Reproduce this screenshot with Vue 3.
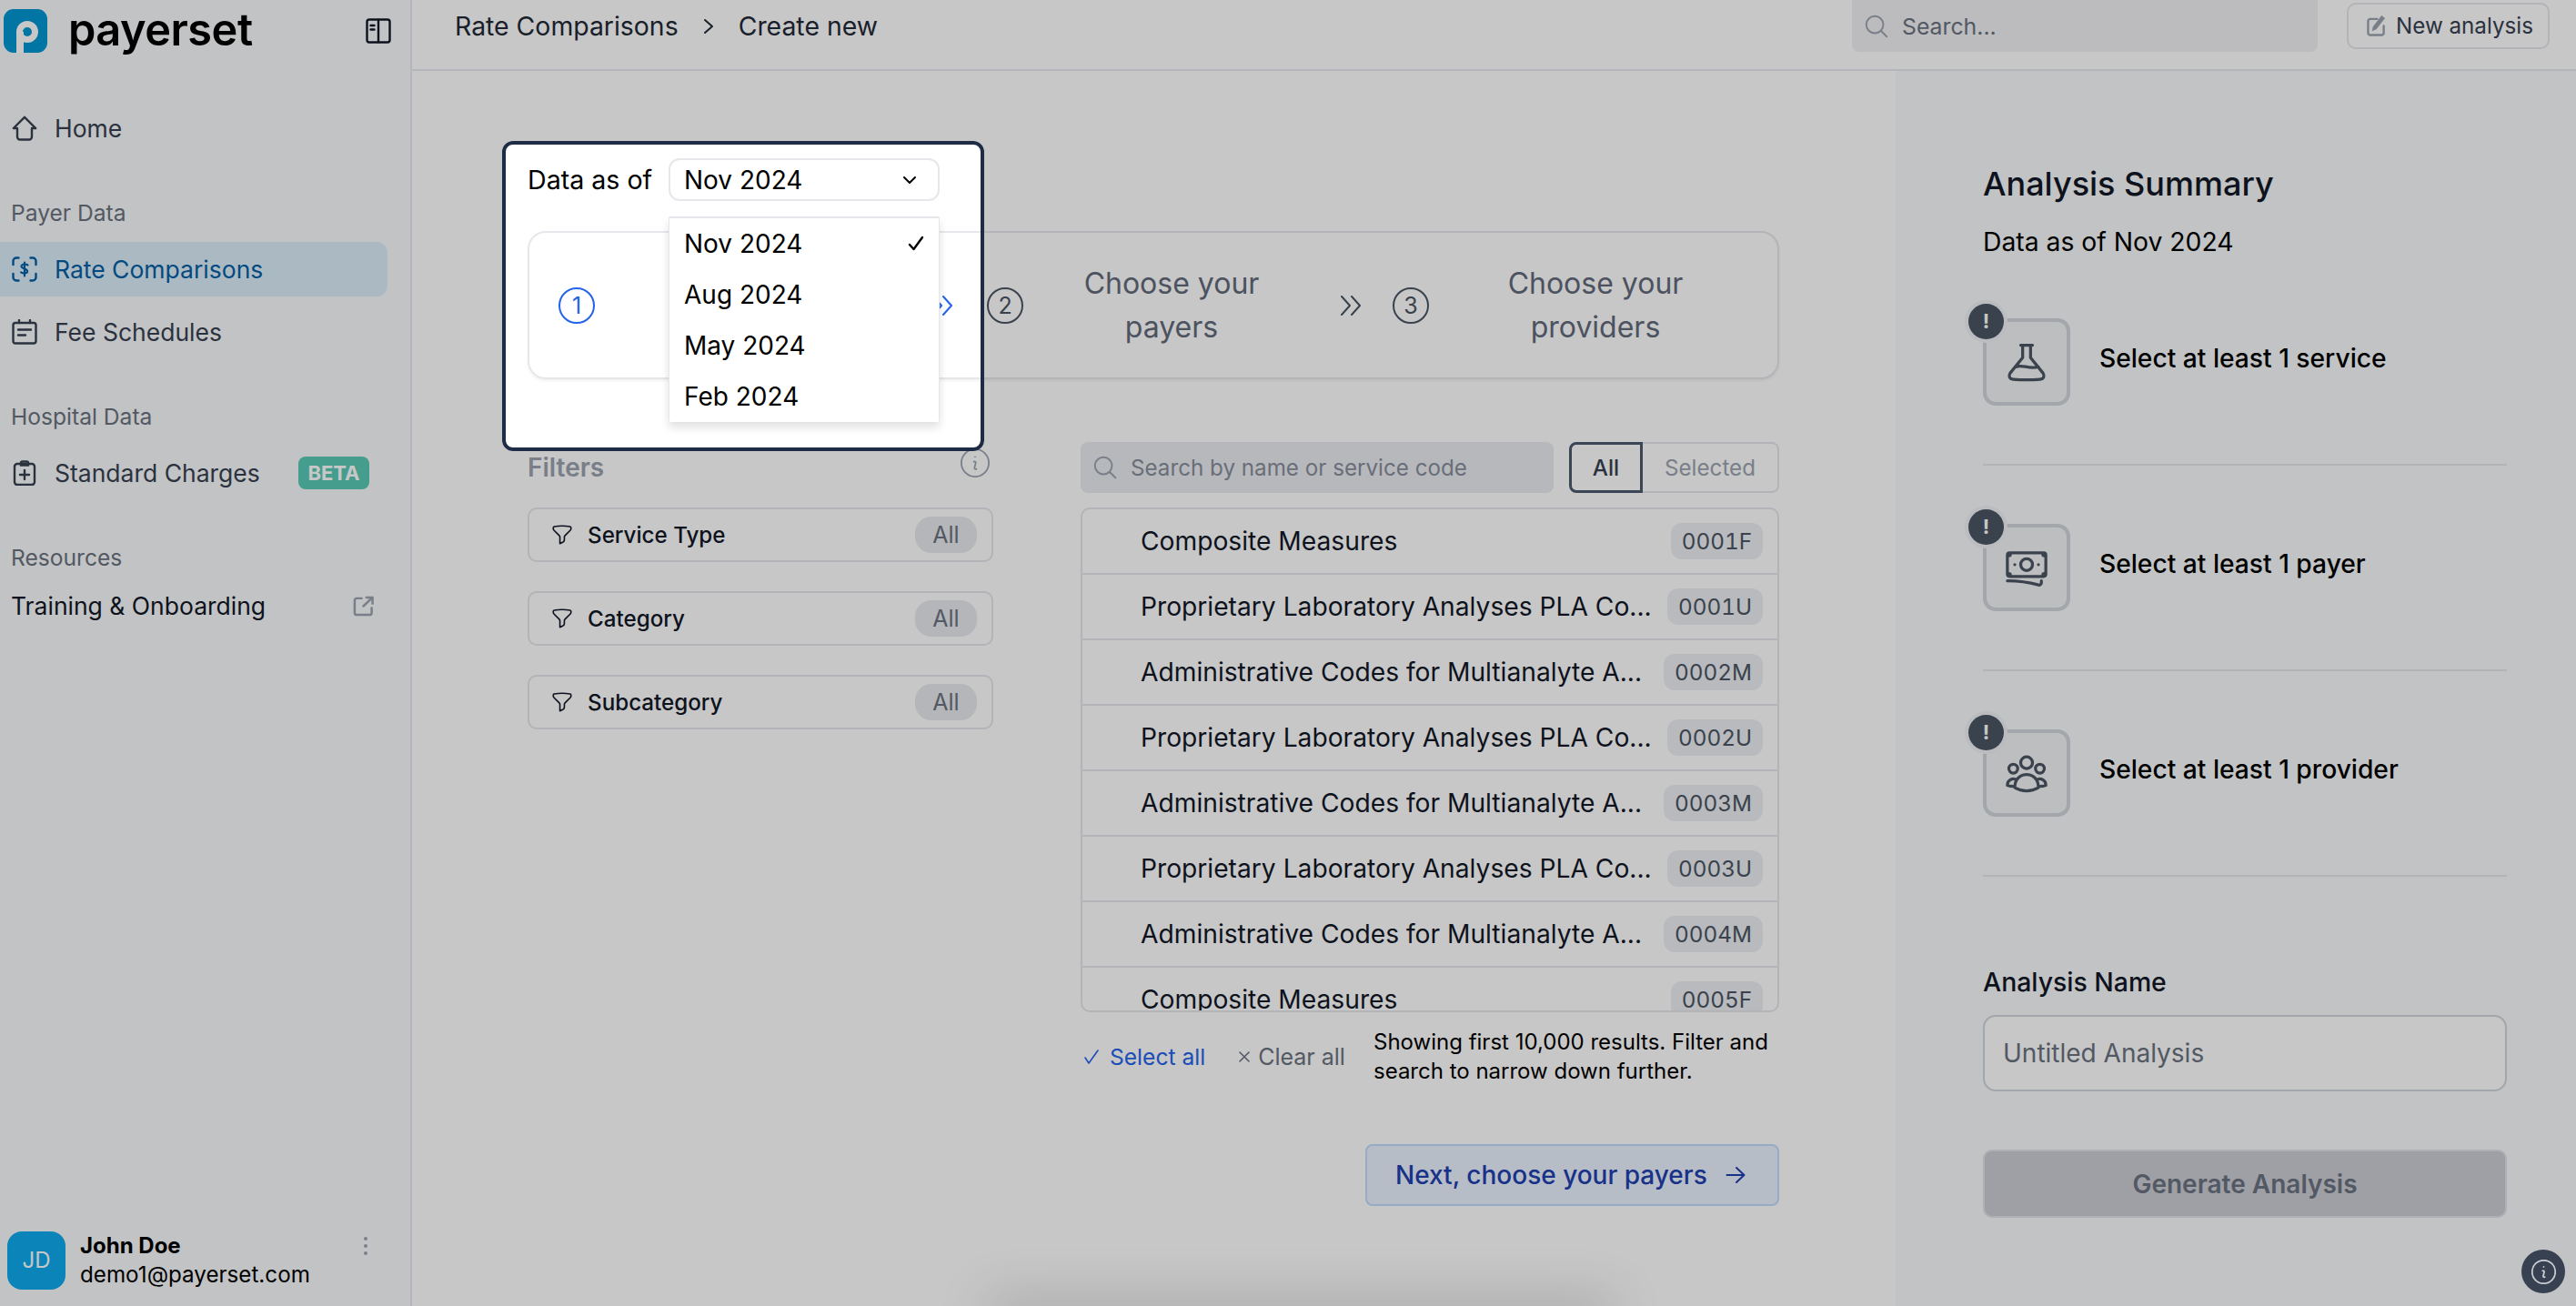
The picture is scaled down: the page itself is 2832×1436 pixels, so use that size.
<template>
  <div class="shell">
    <aside class="sidebar">
      <div class="brand">
        <svg class="logo" viewBox="0 0 48 48">
          <rect width="48" height="48" rx="11" fill="#0296d1" />
          <path d="M14 25h8v23h-8Z" fill="#fff" />
          <circle cx="26" cy="25" r="8.500" fill="none" stroke="#fff" stroke-width="7" />
        </svg>
        <span class="wordmark">payerset</span>
        <svg class="panel-toggle" viewBox="0 0 28 28" fill="none" stroke="#111827" stroke-width="2.400" stroke-linecap="round">
          <rect x="1.500" y="1.500" width="25" height="25" rx="2.500" />
          <path d="M14 2v24M5.500 8h4M5.500 12.500h4" />
        </svg>
      </div>

      <a class="nav-row nav-home">
        <svg class="nav-icon" viewBox="0 0 28 28" fill="none" stroke="currentColor" stroke-width="2.400" stroke-linejoin="round" stroke-linecap="round">
          <path d="M14 1.800 1.800 14h4.200v9.500A3 3 0 0 0 9 26.500h10a3 3 0 0 0 3-3V14h4.200Z" />
        </svg>
        Home
      </a>

      <div class="nav-label">Payer Data</div>
      <a class="nav-row active">
        <svg class="nav-icon" viewBox="0 0 28 28" fill="none" stroke="currentColor" stroke-width="2.400" stroke-linecap="round">
          <path d="M1.500 9V5a3.500 3.500 0 0 1 3.500-3.500h2.500M20.500 1.500H23A3.500 3.500 0 0 1 26.500 5v4M26.500 19v4a3.500 3.500 0 0 1-3.500 3.500h-2.500M7.500 26.500H5A3.500 3.500 0 0 1 1.500 23v-4" />
          <path d="M17.500 9.500c-1-1-5.500-1.800-6.800.5-1.700 3.200 6.800 3.300 6.400 6.500-.4 2.400-5 2.300-7 .8M14 6.500v15" stroke-width="2.200" />
        </svg>
        Rate Comparisons
      </a>
      <a class="nav-row nav-next">
        <svg class="nav-icon" viewBox="0 0 28 28" fill="none" stroke="currentColor" stroke-width="2.400" stroke-linecap="round">
          <rect x="1.500" y="4" width="25" height="22.500" rx="2.500" />
          <path d="M8 1v3M20 1v3M7 11.500h14M7 17.500h8" />
        </svg>
        Fee Schedules
      </a>

      <div class="nav-label">Hospital Data</div>
      <a class="nav-row">
        <svg class="nav-icon" viewBox="0 0 28 28" fill="none" stroke="currentColor" stroke-width="2.400" stroke-linecap="round">
          <rect x="3" y="4" width="22" height="23" rx="3" />
          <path d="M10 4V3a1.500 1.500 0 0 1 1.500-1.500h5A1.500 1.500 0 0 1 18 3v2.500h-8ZM14 11v10M9 16h10" />
        </svg>
        Standard Charges
        <span class="beta">BETA</span>
      </a>

      <div class="nav-label">Resources</div>
      <a class="nav-row nav-link">
        Training &amp; Onboarding
        <svg class="ext-icon" viewBox="0 0 24 24" fill="none" stroke="#9ca3af" stroke-width="2.600" stroke-linecap="round" stroke-linejoin="round">
          <path d="M10 3H4a2.500 2.500 0 0 0-2 2.500V20a2.500 2.500 0 0 0 2.500 2H19a2.500 2.500 0 0 0 2.500-2v-6M12 12 22.500 2M15.500 2h7v7" />
        </svg>
      </a>

      <div class="user">
        <div class="avatar">JD</div>
        <div class="user-text">
          <div class="user-name">John Doe</div>
          <div class="user-mail">demo1@payerset.com</div>
        </div>
        <div class="dots"><i></i><i></i><i></i></div>
      </div>
    </aside>

    <div class="main">
      <header class="topbar">
        <div class="crumbs">
          <span>Rate Comparisons</span>
          <svg class="crumb-sep" viewBox="0 0 12 18" fill="none" stroke="#1f2937" stroke-width="2" stroke-linecap="round" stroke-linejoin="round">
            <path d="M2 2l8 7-8 7" />
          </svg>
          <span>Create new</span>
        </div>
        <div class="top-search">
          <svg class="search-icon" viewBox="0 0 24 24" fill="none" stroke="#9ca3af" stroke-width="1.500" stroke-linecap="round">
            <path d="m21 21-5.197-5.197m0 0A7.500 7.500 0 1 0 5.196 5.196a7.500 7.500 0 0 0 10.607 10.607Z" />
          </svg>
          Search...
        </div>
        <div class="new-btn">
          <svg class="new-icon" viewBox="0 0 22 26" fill="none">
            <path d="M12 5H4a2.500 2.500 0 0 0-2.500 2.500V21A2.500 2.500 0 0 0 4 23.500h13a2.500 2.500 0 0 0 2.500-2.500v-8" stroke="#9ca3af" stroke-width="2.500" stroke-linecap="round" />
            <path d="M17 1l4 3-10 13-5 2 1-5Z" fill="#9ca3af" />
          </svg>
          New analysis
        </div>
      </header>

      <div class="content">
        <section class="workspace">
          <div class="data-row">
            <span class="data-label">Data as of</span>
            <div class="select">
              Nov 2024
              <svg class="chev-down" viewBox="0 0 16 10" fill="none" stroke="#000" stroke-width="2" stroke-linecap="round" stroke-linejoin="round">
                <path d="M2 2l6 6 6-6" />
              </svg>
            </div>
          </div>

          <div class="stepper">
            <div v-for="(step, i) in steps" :key="step.n" class="step" :class="{ current: i === 0 }" :style="{ width: step.width + 'px' }">
              <span class="step-num">{{ step.n }}</span>
              <span class="step-label">{{ step.label }}</span>
              <svg v-if="i < 2" class="step-chev" :style="{ marginRight: step.after + 'px' }" viewBox="0 0 24 22" fill="none" stroke="currentColor" stroke-width="2" stroke-linecap="round" stroke-linejoin="round">
                <path d="M2 1l9 10-9 10M13 1l9 10-9 10" />
              </svg>
            </div>
          </div>

          <div class="columns">
            <div>
              <div class="filters-head">
                <span>Filters</span>
                <svg class="info" viewBox="3 3 18 18" fill="none" stroke="#9ca3af" stroke-width="1" stroke-linecap="round" stroke-linejoin="round">
                  <path d="m11.250 11.250.041-.020a.750.750 0 0 1 1.063.852l-.708 2.836a.750.750 0 0 0 1.063.853l.041-.021M20.500 12a8.500 8.500 0 1 1-17 0 8.500 8.500 0 0 1 17 0Zm-8.500-3.750h.008v.008H12V8.250Z" />
                </svg>
              </div>
              <div v-for="f in filters" :key="f" class="filter">
                <svg class="funnel" viewBox="0 0 24 24" fill="none" stroke="#111827" stroke-width="1.500" stroke-linejoin="round">
                  <path d="M12 3c2.755 0 5.455.232 8.083.678.533.09.917.556.917 1.096v1.044a2.250 2.250 0 0 1-.659 1.591l-5.432 5.432a2.250 2.250 0 0 0-.659 1.591v2.927a2.250 2.250 0 0 1-1.244 2.013L9.750 21v-6.568a2.250 2.250 0 0 0-.659-1.591L3.659 7.409A2.250 2.250 0 0 1 3 5.818V4.774c0-.54.384-1.006.917-1.096A48.320 48.320 0 0 1 12 3Z" />
                </svg>
                <span class="filter-name">{{ f }}</span>
                <span class="filter-pill">All</span>
              </div>
            </div>

            <div>
              <div class="toolbar">
                <div class="list-search">
                  <svg class="search-icon" viewBox="0 0 24 24" fill="none" stroke="#9ca3af" stroke-width="1.500" stroke-linecap="round">
                    <path d="m21 21-5.197-5.197m0 0A7.500 7.500 0 1 0 5.196 5.196a7.500 7.500 0 0 0 10.607 10.607Z" />
                  </svg>
                  Search by name or service code
                </div>
                <div class="tabs">
                  <span class="tab on">All</span>
                  <span class="tab">Selected</span>
                </div>
              </div>

              <div class="code-list">
                <div v-for="row in rows" :key="row.code" class="code-row">
                  <span class="code-name">{{ row.name }}</span>
                  <span class="code-pill">{{ row.code }}</span>
                </div>
              </div>

              <div class="list-foot">
                <span class="select-all">
                  <svg viewBox="0 0 18 18" fill="none" stroke="currentColor" stroke-width="1.600" stroke-linecap="round" stroke-linejoin="round"><path d="M2 10l4 6 10-14" /></svg>
                  Select all
                </span>
                <span class="clear-all">
                  <svg viewBox="0 0 14 14" fill="none" stroke="currentColor" stroke-width="1.600" stroke-linecap="round"><path d="M2 2l10 10M12 2 2 12" /></svg>
                  Clear all
                </span>
                <span class="showing">Showing first 10,000 results. Filter and search to narrow down further.</span>
              </div>

              <div class="next-wrap">
                <div class="next-btn">
                  Next, choose your payers
                  <svg viewBox="0 0 22 20" fill="none" stroke="currentColor" stroke-width="2" stroke-linecap="round" stroke-linejoin="round"><path d="M1.500 10h19M12 2l8.500 8-8.500 8" /></svg>
                </div>
              </div>
            </div>
          </div>
        </section>

        <section class="summary">
          <h2>Analysis Summary</h2>
          <div class="summary-date">Data as of Nov 2024</div>

          <div class="req">
            <div class="req-box">
              <span class="req-badge">!</span>
              <svg viewBox="0 0 24 24" fill="none" stroke="#4b5563" stroke-width="1.500" stroke-linecap="round" stroke-linejoin="round">
                <path d="M9 3.500h6M10 3.500v6.300L3.700 17.600c-1 1.400-.5 3 1.500 3.200 4.500.4 9.100.4 13.600 0 2-.2 2.500-1.800 1.500-3.200L14 9.800V3.500M6.500 14.500c3.500-1.500 6 1.300 11.500 0" />
              </svg>
            </div>
            <span class="req-text">Select at least 1 service</span>
          </div>
          <div class="req">
            <div class="req-box">
              <span class="req-badge">!</span>
              <svg viewBox="0 0 24 24" fill="none" stroke="#4b5563" stroke-width="1.500" stroke-linecap="round" stroke-linejoin="round">
                <path d="M2.250 18.750a60.070 60.070 0 0 1 15.797 2.101c.727.198 1.453-.342 1.453-1.096V18.750M3.750 4.500v.75A.75.75 0 0 1 3 6h-.75m0 0v-.375c0-.621.504-1.125 1.125-1.125H20.250M2.250 6v9m18-10.500v.75c0 .414.336.75.75.75h.75m-1.500-1.500h.375c.621 0 1.125.504 1.125 1.125v9.750c0 .621-.504 1.125-1.125 1.125h-.375m1.500-1.500H21a.75.75 0 0 0-.75.75v.75m0 0H3.750m0 0h-.375a1.125 1.125 0 0 1-1.125-1.125V15m1.500 1.500v-.75A.75.75 0 0 0 3 15h-.75M15 10.500a3 3 0 1 1-6 0 3 3 0 0 1 6 0Zm3 0h.008v.008H18V10.500Zm-12 0h.008v.008H6V10.500Z" />
              </svg>
            </div>
            <span class="req-text">Select at least 1 payer</span>
          </div>
          <div class="req">
            <div class="req-box">
              <span class="req-badge">!</span>
              <svg viewBox="0 0 24 24" fill="none" stroke="#4b5563" stroke-width="1.500" stroke-linecap="round" stroke-linejoin="round">
                <path d="M18 18.720a9.094 9.094 0 0 0 3.741-.479 3 3 0 0 0-4.682-2.720m.94 3.198.001.031c0 .225-.012.447-.037.666A11.944 11.944 0 0 1 12 21c-2.170 0-4.207-.576-5.963-1.584A6.062 6.062 0 0 1 6 18.719m12 0a5.971 5.971 0 0 0-.941-3.197m0 0A5.995 5.995 0 0 0 12 12.750a5.995 5.995 0 0 0-5.058 2.772m0 0a3 3 0 0 0-4.681 2.720 8.986 8.986 0 0 0 3.740.477m.94-3.197a5.971 5.971 0 0 0-.94 3.197M15 6.750a3 3 0 1 1-6 0 3 3 0 0 1 6 0Zm6 3a2.250 2.250 0 1 1-4.500 0 2.250 2.250 0 0 1 4.500 0Zm-13.500 0a2.250 2.250 0 1 1-4.500 0 2.250 2.250 0 0 1 4.500 0Z" />
              </svg>
            </div>
            <span class="req-text">Select at least 1 provider</span>
          </div>

          <label class="name-label">Analysis Name</label>
          <div class="name-input">Untitled Analysis</div>
          <div class="generate">Generate Analysis</div>
        </section>
      </div>
    </div>

    <div class="page-shadow"></div>

    <!-- onboarding tour: dims everything except the cut-out -->
    <div class="tour-cutout"></div>
    <div class="date-menu">
      <div v-for="(m, i) in months" :key="m" class="date-item">
        {{ m }}
        <svg v-if="i === 0" viewBox="0 0 18 18" fill="none" stroke="#000" stroke-width="2.400" stroke-linecap="round" stroke-linejoin="round"><path d="M2 10l4.500 5L16 2" /></svg>
      </div>
    </div>

    <div class="help-btn">
      <svg viewBox="3 3 18 18" fill="none" stroke="#c9ccd1" stroke-width="1.200" stroke-linecap="round" stroke-linejoin="round">
        <path d="m11.250 11.250.041-.020a.750.750 0 0 1 1.063.852l-.708 2.836a.750.750 0 0 0 1.063.853l.041-.021M20.500 12a8.500 8.500 0 1 1-17 0 8.500 8.500 0 0 1 17 0Zm-8.500-3.750h.008v.008H12V8.250Z" />
      </svg>
    </div>
  </div>
</template>

<script setup>
const months = ['Nov 2024', 'Aug 2024', 'May 2024', 'Feb 2024']
const filters = ['Service Type', 'Category', 'Subcategory']

// step 1's label sits under the open date menu
const steps = [
  { n: 1, label: '', width: 471, after: 37 },
  { n: 2, label: 'Choose your payers', width: 446, after: 34 },
  { n: 3, label: 'Choose your providers', width: 406 }
]

const pla = 'Proprietary Laboratory Analyses PLA Co...'
const admin = 'Administrative Codes for Multianalyte A...'
const rows = [
  { name: 'Composite Measures', code: '0001F' },
  { name: pla, code: '0001U' },
  { name: admin, code: '0002M' },
  { name: pla, code: '0002U' },
  { name: admin, code: '0003M' },
  { name: pla, code: '0003U' },
  { name: admin, code: '0004M' },
  { name: 'Composite Measures', code: '0005F' }
]
</script>

<style>
html, body {
  margin: 0;
  overflow: hidden;
  background: #fff;
}
</style>

<style scoped>
.shell {
  position: relative;
  display: flex;
  width: 2832px;
  height: 1436px;
  overflow: hidden;
  font-family: Inter, "Liberation Sans", sans-serif;
  color: #111827;
}

/* sidebar */
.sidebar {
  box-sizing: border-box;
  display: flex;
  flex-direction: column;
  flex: none;
  width: 453px;
  padding-right: 25px;
  background: #f9fafb;
  border-right: 2px solid #e8e9f0;
}
.brand {
  display: flex;
  align-items: center;
  height: 48px;
  margin-top: 10px;
  padding-left: 4px;
}
.logo {
  width: 48px;
  height: 48px;
}
.wordmark {
  margin-top: -3px;
  margin-left: 23px;
  font-size: 48.700px;
  font-weight: 600;
  line-height: 48px;
  letter-spacing: -0.5px;
  color: #000;
}
.panel-toggle {
  width: 28px;
  height: 28px;
  margin-left: auto;
  margin-right: -4px;
}
.nav-row {
  display: flex;
  align-items: center;
  height: 60px;
  padding-left: 13px;
  padding-right: 20px;
  font-size: 26.500px;
  color: #374151;
  border-radius: 0 12px 12px 0;
}
.nav-home {
  margin-top: 53px;
}
.nav-next {
  margin-top: 9px;
}
.nav-icon {
  width: 28px;
  height: 28px;
  margin-right: 19px;
  flex: none;
}
.nav-row.active {
  background: #dbedfa;
  color: #055fa4;
}
.nav-label {
  margin-top: 46px;
  margin-bottom: 15px;
  padding-left: 12px;
  font-size: 24.600px;
  line-height: 34px;
  color: #6b7280;
}
.nav-link {
  margin-top: -9px;
  padding-left: 12px;
  padding-right: 15px;
  color: #111827;
}
.beta {
  margin-left: auto;
  width: 78px;
  height: 36px;
  line-height: 36px;
  text-align: center;
  font-size: 22px;
  font-weight: 700;
  color: #fff;
  background: #59c9b6;
  border-radius: 8px;
}
.ext-icon {
  width: 23px;
  height: 23px;
  margin-left: auto;
}
.user {
  display: flex;
  align-items: flex-start;
  margin-top: auto;
  padding: 0 0 18px 8px;
}
.avatar {
  flex: none;
  width: 64px;
  height: 64px;
  line-height: 64px;
  text-align: center;
  font-size: 24px;
  color: #fff;
  background: #0fa9ed;
  border-radius: 16px;
}
.user-text {
  margin-left: 16px;
}
.user-name {
  font-size: 24px;
  font-weight: 700;
  line-height: 32px;
  color: #000;
}
.user-mail {
  font-size: 24.200px;
  line-height: 32px;
  color: #000;
}
.dots {
  display: flex;
  flex-direction: column;
  gap: 4px;
  margin-left: auto;
  margin-right: 22px;
  margin-top: 6px;
}
.dots i {
  width: 4px;
  height: 4px;
  background: #9ca3af;
  border-radius: 50%;
}

/* top bar + content */
.main {
  display: flex;
  flex-direction: column;
  flex: 1;
  min-width: 0;
  background: #fff;
}
.topbar {
  box-sizing: border-box;
  display: flex;
  align-items: flex-start;
  flex: none;
  height: 78px;
  padding: 0 29px 0 47px;
  border-bottom: 2px solid #e8e9f0;
}
.crumbs {
  display: flex;
  align-items: center;
  gap: 27px;
  font-size: 28.400px;
  line-height: 58px;
  color: #1f2937;
}
.crumb-sep {
  width: 12px;
  height: 18px;
}
.top-search {
  box-sizing: border-box;
  display: flex;
  align-items: center;
  width: 512px;
  height: 57px;
  margin-left: auto;
  padding-left: 12px;
  font-size: 24.800px;
  color: #6b7280;
  background: #f1f1f4;
  border-radius: 0 0 8px 8px;
}
.search-icon {
  width: 30px;
  height: 30px;
  margin-right: 13px;
  flex: none;
}
.new-btn {
  box-sizing: border-box;
  display: flex;
  align-items: center;
  height: 51px;
  width: 223px;
  margin: 3px 0 0 32px;
  padding-left: 20px;
  font-size: 24.200px;
  color: #374151;
  border: 2px solid #e5e7eb;
  border-radius: 10px;
}
.new-icon {
  width: 21px;
  height: 25px;
  margin-right: 11px;
}
.content {
  display: flex;
  flex: 1;
  min-height: 0;
}
.workspace {
  flex: 1;
  min-width: 0;
  padding: 96px 0 0 127px;
}
.data-row {
  display: flex;
  align-items: center;
  font-size: 28px;
  color: #000;
}
.data-label {
  width: 155px;
  font-size: 28.600px;
}
.select {
  box-sizing: border-box;
  display: flex;
  align-items: center;
  justify-content: space-between;
  width: 298px;
  height: 47px;
  padding: 0 23px 0 15px;
  border: 2px solid #e5e7eb;
  border-radius: 12px;
}
.chev-down {
  width: 16px;
  height: 10px;
}

/* stepper */
.stepper {
  box-sizing: border-box;
  display: flex;
  align-items: center;
  width: 1376px;
  height: 163px;
  margin-top: 33px;
  padding-left: 32px;
  border: 2px solid #e5e7eb;
  border-radius: 20px;
  box-shadow: 0 2px 3px rgba(0, 0, 0, 0.05);
}
.step {
  display: flex;
  align-items: center;
  flex: none;
  color: #4b5563;
}
.step.current {
  color: #2563eb;
}
.step-num {
  box-sizing: border-box;
  flex: none;
  width: 40px;
  height: 40px;
  line-height: 36px;
  text-align: center;
  font-size: 25px;
  border: 2px solid currentColor;
  border-radius: 50%;
}
.step-label {
  flex: 1;
  padding: 0 60px;
  text-align: center;
  font-size: 32px;
  line-height: 48px;
  color: #626a7a;
}
.step-chev {
  flex: none;
  width: 24px;
  height: 22px;
  margin-left: 22px;
}

/* filters + list */
.columns {
  display: grid;
  grid-template-columns: 512px 768px;
  column-gap: 96px;
  margin-top: 69px;
}
.filters-head {
  display: flex;
  align-items: flex-start;
  justify-content: space-between;
  height: 56px;
  margin-bottom: 16px;
  padding-right: 4px;
  font-size: 28px;
  font-weight: 600;
  line-height: 56px;
  color: #9ca3af;
}
.info {
  width: 32px;
  height: 32px;
  margin-top: 7px;
}
.filter {
  box-sizing: border-box;
  display: flex;
  align-items: center;
  height: 60px;
  margin-bottom: 32px;
  padding: 0 16px 0 23px;
  border: 2px solid #e5e7eb;
  border-radius: 10px;
}
.funnel {
  width: 26px;
  height: 26px;
  margin-right: 15px;
}
.filter-name {
  font-size: 24.200px;
  font-weight: 500;
  color: #111827;
}
.filter-pill {
  width: 68px;
  height: 40px;
  margin-left: auto;
  line-height: 40px;
  text-align: center;
  font-size: 25px;
  color: #6b7280;
  background: #e8eaee;
  border-radius: 18px;
}
.toolbar {
  display: flex;
  justify-content: space-between;
  height: 56px;
  margin-bottom: 16px;
}
.list-search {
  box-sizing: border-box;
  display: flex;
  align-items: center;
  width: 520px;
  padding-left: 12px;
  font-size: 24.200px;
  color: #878e9c;
  background: #ebecf1;
  border-radius: 8px;
}
.tabs {
  display: flex;
  width: 231px;
  font-size: 24.200px;
}
.tab {
  box-sizing: border-box;
  display: flex;
  align-items: center;
  justify-content: center;
  flex: 1;
  color: #9ca3af;
  border: 2px solid #e5e7eb;
  border-left: 0;
  border-radius: 0 8px 8px 0;
}
.tab.on {
  flex: none;
  width: 81px;
  font-weight: 500;
  color: #374151;
  border: 3px solid #4b5a6d;
  border-radius: 8px 0 0 8px;
}
.code-list {
  box-sizing: border-box;
  height: 555px;
  overflow: hidden;
  border: 2px solid #e5e7eb;
  border-radius: 10px;
}
.code-row {
  box-sizing: border-box;
  display: flex;
  align-items: center;
  justify-content: space-between;
  height: 72px;
  padding: 0 16px 0 64px;
  border-bottom: 2px solid #e5e7eb;
}
.code-name {
  white-space: nowrap;
  font-size: 28.200px;
  color: #111827;
}
.code-pill {
  flex: none;
  padding: 0 12px;
  line-height: 40px;
  font-size: 24.300px;
  font-feature-settings: "tnum";
  color: #4b5563;
  background: #eceff3;
  border-radius: 12px;
}
.list-foot {
  display: flex;
  align-items: center;
  margin-top: 17px;
  font-size: 25px;
}
.select-all,
.clear-all {
  display: flex;
  align-items: center;
  white-space: nowrap;
}
.select-all {
  margin-left: 3px;
  color: #2563eb;
  font-size: 24.600px;
}
.select-all svg {
  width: 18px;
  height: 18px;
  margin-right: 11px;
}
.clear-all {
  margin-left: 36px;
  color: #6b7280;
}
.clear-all svg {
  width: 14px;
  height: 14px;
  margin-right: 8px;
}
.showing {
  margin-left: auto;
  width: 446px;
  font-size: 24px;
  line-height: 32px;
  color: #000;
}
.next-wrap {
  display: flex;
  justify-content: flex-end;
  margin-top: 64px;
}
.next-btn {
  box-sizing: border-box;
  display: flex;
  align-items: center;
  width: 455px;
  height: 68px;
  padding-left: 31px;
  font-size: 28px;
  font-weight: 500;
  color: #1e40af;
  background: #ebf2ff;
  border: 2px solid #bfdbfe;
  border-radius: 8px;
}
.next-btn svg {
  width: 22px;
  height: 20px;
  margin-left: 20px;
}

/* right summary */
.summary {
  box-sizing: border-box;
  flex: none;
  width: 748px;
  padding: 100px 76px 0 96px;
  background: #f9fafb;
}
h2 {
  margin: 0;
  font-size: 36px;
  font-weight: 500;
  line-height: 48px;
  color: #111827;
}
.summary-date {
  margin-top: 20px;
  font-size: 28.300px;
  line-height: 40px;
  color: #000;
}
.req {
  display: flex;
  align-items: flex-start;
  gap: 32px;
  padding: 64px 0;
  border-bottom: 2px solid #e5e7eb;
}
.req-box {
  position: relative;
  box-sizing: border-box;
  display: flex;
  align-items: center;
  justify-content: center;
  flex: none;
  width: 96px;
  height: 96px;
  background: #f3f4f6;
  border: 4px solid #d1d5db;
  border-radius: 14px;
}
.req-box svg {
  width: 52px;
  height: 52px;
}
.req-badge {
  position: absolute;
  left: -20px;
  top: -20px;
  width: 39px;
  height: 39px;
  line-height: 39px;
  text-align: center;
  font-size: 22px;
  font-weight: 700;
  color: #fff;
  background: #4b5563;
  border-radius: 50%;
  box-shadow: 0 0 0 4px #f0f1f5;
}
.req-text {
  font-size: 28.200px;
  font-weight: 500;
  line-height: 88px;
  color: #000;
}
.name-label {
  display: block;
  margin-top: 96px;
  font-size: 28.400px;
  font-weight: 500;
  line-height: 40px;
  color: #111827;
}
.name-input {
  box-sizing: border-box;
  height: 84px;
  margin-top: 16px;
  padding-left: 20px;
  font-size: 28px;
  line-height: 80px;
  color: #6b7280;
  background: #fff;
  border: 2px solid #d1d5db;
  border-radius: 14px;
}
.generate {
  box-sizing: border-box;
  height: 75px;
  margin-top: 64px;
  text-align: center;
  font-size: 28px;
  font-weight: 600;
  line-height: 72px;
  color: #6b7280;
  background: #cbced4;
  border: 2px solid #e0e2e8;
  border-radius: 10px;
}

/* overlays */
.page-shadow {
  position: absolute;
  left: 1090px;
  bottom: -14px;
  width: 680px;
  height: 14px;
  box-shadow: 0 0 56px 4px rgba(0, 0, 0, 0.25);
}
.tour-cutout {
  box-sizing: border-box;
  position: absolute;
  left: 552px;
  top: 155px;
  width: 530px;
  height: 341px;
  border: 4px solid #1e2d45;
  border-radius: 12px;
  box-shadow: 0 0 0 3000px rgba(0, 0, 0, 0.22);
  pointer-events: none;
}
.date-menu {
  box-sizing: border-box;
  position: absolute;
  left: 735px;
  top: 238px;
  width: 298px;
  height: 226px;
  background: #fff;
  border: 2px solid #e5e7eb;
  border-width: 2px 1px 0;
  box-shadow: 0 6px 10px rgba(0, 0, 0, 0.12);
  border-radius: 2px;
}
.date-item {
  display: flex;
  align-items: center;
  justify-content: space-between;
  height: 56px;
  padding: 0 16px 0 16px;
  font-size: 28px;
  color: #000;
}
.date-item svg {
  width: 18px;
  height: 18px;
}
.help-btn {
  position: absolute;
  left: 2772px;
  top: 1374px;
  display: flex;
  align-items: center;
  justify-content: center;
  width: 48px;
  height: 48px;
  background: #374151;
  border-radius: 50%;
}
.help-btn svg {
  width: 27px;
  height: 27px;
}
</style>
